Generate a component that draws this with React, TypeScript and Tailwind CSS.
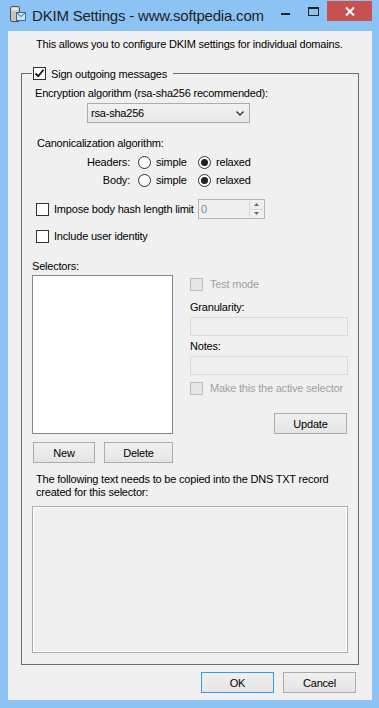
import type { ReactNode } from 'react';

function CheckBox({ checked, disabled }: { checked?: boolean; disabled?: boolean }) {
	return (
		<span
			className={
				'flex h-[13px] w-[13px] shrink-0 items-center justify-center border ' +
				(disabled ? 'border-[#bcbcbc] bg-[#e6e6e6]' : 'border-[#333333] bg-white')
			}
		>
			{checked && (
				<svg width="11" height="11" viewBox="0 0 11 11">
					<path d="M1.5 5.5 L4.2 8.2 L9.5 1.8" fill="none" stroke="#111" strokeWidth="1.8" />
				</svg>
			)}
		</span>
	);
}

function Radio({ checked }: { checked?: boolean }) {
	return (
		<span className="flex h-[13px] w-[13px] shrink-0 items-center justify-center rounded-full border border-[#333333] bg-white">
			{checked && <span className="h-[7px] w-[7px] rounded-full bg-[#222]" />}
		</span>
	);
}

function Button({ children, width, focused }: { children: ReactNode; width: string; focused?: boolean }) {
	return (
		<div
			className={
				'flex h-[21px] items-center justify-center border bg-gradient-to-b from-[#f0f0f0] to-[#e5e5e5] ' +
				width +
				(focused ? ' border-[#3399ff]' : ' border-[#acacac]')
			}
		>
			{children}
		</div>
	);
}

function RadioRow({ label }: { label: string }) {
	return (
		<div className="flex h-[18px] items-center">
			<div className="w-[108px] text-right">{label}</div>
			<div className="ml-[8px] flex w-[60px] items-center gap-[5px]">
				<Radio />
				<span>simple</span>
			</div>
			<div className="flex items-center gap-[5px]">
				<Radio checked />
				<span>relaxed</span>
			</div>
		</div>
	);
}

function TitleBar() {
	return (
		<div className="flex h-[31px] items-start">
			<div className="ml-[10px] mt-[6px] w-[16px]">
				<svg width="16" height="17" viewBox="0 0 16 17">
					<rect x="0.5" y="0.5" width="9" height="15" rx="1.5" fill="#c4c4c4" stroke="#505050" />
					<rect x="1.5" y="1.5" width="7" height="3" fill="#e8e8e8" />
					<rect x="6.5" y="6.5" width="9" height="8" fill="#c6e4f8" stroke="#3b6e98" />
					<path d="M6.5 6.5 L11 10.5 L15.5 6.5" fill="none" stroke="#3b6e98" />
				</svg>
			</div>
			<div className="ml-[6px] mt-[7px] text-[15px] leading-[18px] text-[#1e1e1e]">DKIM Settings - www.softpedia.com</div>
			<div className="ml-auto flex items-start">
				<div className="mt-[13px] h-[2px] w-[9px] bg-[#222]" />
				<div className="ml-[18px] mt-[7px] h-[9px] w-[11px] border border-t-2 border-[#222]" />
				<div className="ml-[8px] mt-[1px] flex h-[20px] w-[45px] items-center justify-center bg-[#c75050]">
					<svg width="10" height="9" viewBox="0 0 10 9">
						<path d="M1 0.5 L9 8.5 M9 0.5 L1 8.5" stroke="#fff" strokeWidth="2" />
					</svg>
				</div>
				<div className="w-[7px]" />
			</div>
		</div>
	);
}

export default function App() {
	return (
		<div className="h-[708px] w-[379px] overflow-hidden bg-[#8cc3f4] font-['Liberation_Sans',Arial,sans-serif] text-[11px] leading-[14px] tracking-[-0.2px] text-black">
			<TitleBar />
			<div className="ml-[8px] flex h-[669px] w-[364px] flex-col bg-[#f0f0f0]">
				<div className="pl-[28px] pt-[6px]">This allows you to configure DKIM settings for individual domains.</div>

				<fieldset className="ml-[13px] mt-[16px] w-[338px] border border-[#6b6b6b] pb-[11px]">
					<legend className="ml-[10px] flex h-[13px] items-center gap-[5px] pl-[1px] pr-[6px]">
						<CheckBox checked />
						<span>Sign outgoing messages</span>
					</legend>

					<div className="mt-[6px] pl-[13px]">Encryption algorithm (rsa-sha256 recommended):</div>
					<div className="ml-[65px] mt-[3px] flex h-[20px] w-[163px] items-center border border-[#acacac] bg-gradient-to-b from-[#f2f2f2] to-[#e6e6e6] pl-[3px]">
						<span>rsa-sha256</span>
						<svg className="ml-auto mr-[5px]" width="8" height="5" viewBox="0 0 8 5">
							<path d="M0.5 0.5 L4 4 L7.5 0.5" fill="none" stroke="#333" strokeWidth="1.4" />
						</svg>
					</div>

					<div className="mt-[13px] pl-[15px]">Canonicalization algorithm:</div>
					<div className="mt-[3px]">
						<RadioRow label="Headers:" />
						<RadioRow label="Body:" />
					</div>

					<div className="mt-[10px] grid h-[20px] grid-cols-[176px_67px] items-center">
						<div className="flex items-center gap-[5px] pl-[14px]">
							<CheckBox />
							<span>Impose body hash length limit</span>
						</div>
						<div className="flex h-[20px] items-center border border-[#b4b4b4] bg-[#f0f0f0]">
							<span className="pl-[2px] text-[#7a8797]">0</span>
							<div className="ml-auto mr-[1px] flex h-[16px] w-[14px] flex-col border-l border-[#d6d6d6]">
								<div className="flex flex-1 items-center justify-center border-b border-[#d6d6d6]">
									<svg width="5" height="3" viewBox="0 0 5 3">
										<path d="M0 3 L2.5 0 L5 3Z" fill="#666" />
									</svg>
								</div>
								<div className="flex flex-1 items-center justify-center">
									<svg width="5" height="3" viewBox="0 0 5 3">
										<path d="M0 0 L2.5 3 L5 0Z" fill="#666" />
									</svg>
								</div>
							</div>
						</div>
					</div>

					<div className="mt-[10px] flex h-[14px] items-center gap-[5px] pl-[14px]">
						<CheckBox />
						<span>Include user identity</span>
					</div>

					<div className="mt-[16px] pl-[10px]">Selectors:</div>
					<div className="mt-[2px] flex pl-[10px]">
						<div className="flex w-[141px] flex-col">
							<div className="h-[159px] border border-[#828790] bg-white" />
							<div className="ml-[1px] mt-[8px] flex gap-[9px]">
								<Button width="w-[62px]">New</Button>
								<Button width="w-[69px]">Delete</Button>
							</div>
						</div>
						<div className="ml-[17px] flex w-[158px] flex-col">
							<div className="mt-[2px] flex h-[14px] items-center gap-[7px] text-[#a0a0a0]">
								<CheckBox disabled />
								<span>Test mode</span>
							</div>
							<div className="mt-[9px]">Granularity:</div>
							<div className="mt-[3px] h-[19px] border border-[#d9d9d9] bg-[#f0f0f0]" />
							<div className="mt-[3px]">Notes:</div>
							<div className="mt-[3px] h-[19px] border border-[#d9d9d9] bg-[#f0f0f0]" />
							<div className="mt-[6px] flex h-[14px] items-center gap-[7px] text-[#a0a0a0]">
								<CheckBox disabled />
								<span>Make this the active selector</span>
							</div>
							<div className="mr-[1px] mt-[18px] self-end">
								<Button width="w-[73px]">Update</Button>
							</div>
						</div>
					</div>

					<div className="mt-[10px] pl-[14px] leading-[13px]">
						The following text needs to be copied into the DNS TXT record
						<br />
						created for this selector:
					</div>
					<div className="ml-[10px] mt-[7px] h-[147px] w-[316px] border border-[#adadad] bg-[#f0f0f0] shadow-[inset_0_0_0_1px_#ffffff]" />
				</fieldset>

				<div className="mt-[7px] flex justify-end gap-[9px] pr-[16px]">
					<Button width="w-[73px]" focused>
						OK
					</Button>
					<Button width="w-[73px]">Cancel</Button>
				</div>
			</div>
		</div>
	);
}
